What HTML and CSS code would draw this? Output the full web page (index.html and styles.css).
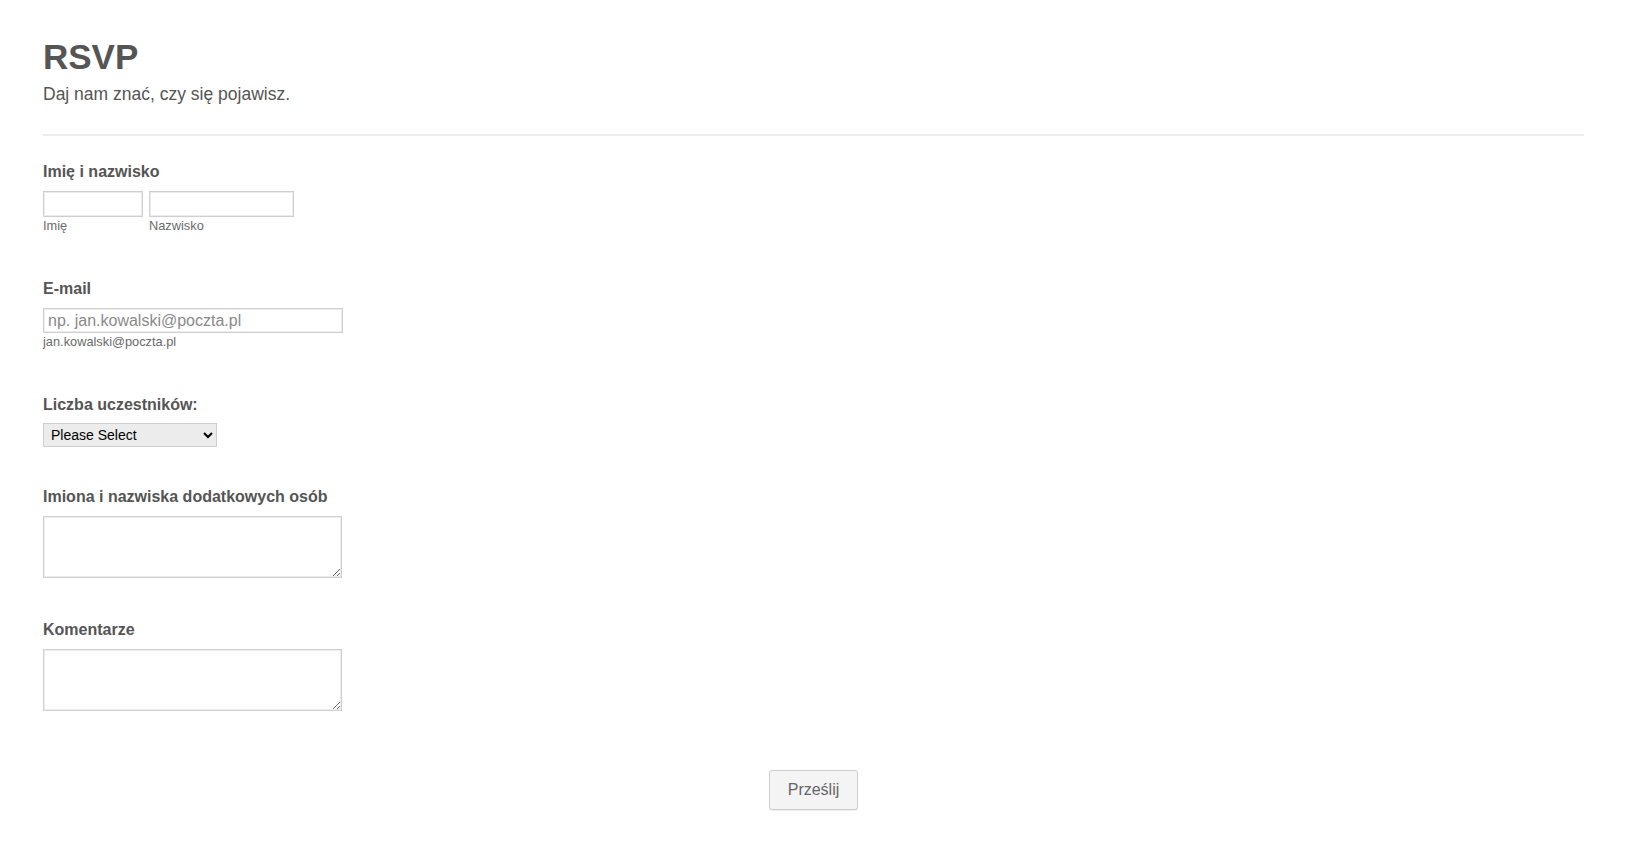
FILE: index.html
```html
<!DOCTYPE html>
<html>
<head>
    <meta charset="utf-8">
    <title>RSVP</title>
    <link rel="stylesheet" href="styles.css">
</head>
<body>
    <form class="form-all" id="rsvpForm">
        <!-- Header -->
        <div class="form-header">
            <h1 class="form-title">RSVP</h1>
            <div class="form-subtitle">Daj nam znać, czy się pojawisz.</div>
        </div>

        <ul class="form-section">
            <!-- Name -->
            <li class="form-line with-sublabel">
                <label class="form-label">Imię i nazwisko</label>
                <div class="name-row">
                    <span class="sub-field">
                        <input type="text" id="first_name" name="first_name" class="input-first">
                        <label for="first_name" class="form-sublabel">Imię</label>
                    </span>
                    <span class="sub-field">
                        <input type="text" id="last_name" name="last_name" class="input-last">
                        <label for="last_name" class="form-sublabel">Nazwisko</label>
                    </span>
                </div>
            </li>

            <!-- Email -->
            <li class="form-line with-sublabel">
                <label class="form-label" for="email">E-mail</label>
                <input type="email" id="email" name="email" class="input-email" placeholder="np. jan.kowalski@poczta.pl">
                <label for="email" class="form-sublabel">jan.kowalski@poczta.pl</label>
            </li>

            <!-- Guests -->
            <li class="form-line with-select">
                <label class="form-label" for="guests">Liczba uczestników:</label>
                <select id="guests" name="guests" class="input-select">
                    <option value="">Please Select</option>
                    <option value="1">1</option>
                    <option value="2">2</option>
                    <option value="3">3</option>
                    <option value="4">4</option>
                </select>
            </li>

            <!-- Extra guests -->
            <li class="form-line with-textarea">
                <label class="form-label" for="extra_names">Imiona i nazwiska dodatkowych osób</label>
                <textarea id="extra_names" name="extra_names" class="input-textarea"></textarea>
            </li>

            <!-- Comments -->
            <li class="form-line with-textarea">
                <label class="form-label" for="comments">Komentarze</label>
                <textarea id="comments" name="comments" class="input-textarea"></textarea>
            </li>
        </ul>

        <div class="form-buttons">
            <button type="submit" class="submit-button">Prześlij</button>
        </div>
    </form>
</body>
</html>
```

FILE: styles.css
```css
body {
    margin: 0;
    padding: 0;
    background-color: #fff;
    color: #555;
    font-family: "Liberation Sans", Arial, sans-serif;
}

.form-all {
    padding: 36px 44px 40px 43px;
}

/* Header */
.form-header {
    padding-bottom: 29px;
    border-bottom: 2px solid #ececec;
}

.form-title {
    margin: 0;
    font-size: 35px;
    line-height: 42px;
    font-weight: bold;
    color: #555;
}

.form-subtitle {
    margin-top: 5px;
    font-size: 17.5px;
    line-height: 22px;
    color: #555;
}

/* Fields */
.form-section {
    list-style: none;
    margin: 26px 0 0 0;
    padding: 0;
}

.form-line {
    margin-bottom: 38px;
}

.form-line.with-sublabel {
    margin-bottom: 46px;
}

.form-line.with-select {
    margin-bottom: 40px;
}

.form-line.with-select .form-label {
    margin-bottom: 8px;
}

.form-line.with-textarea {
    margin-bottom: 42px;
}

.form-label {
    display: block;
    font-size: 16px;
    line-height: 20px;
    font-weight: bold;
    color: #555;
    margin-bottom: 9px;
}

.form-sublabel {
    display: block;
    margin-top: 1px;
    font-size: 12.8px;
    line-height: 15px;
    color: #6a6a6a;
}

.name-row {
    display: flex;
    gap: 6px;
}

.sub-field {
    display: flex;
    flex-direction: column;
}

input[type="text"], input[type="email"] {
    box-sizing: border-box;
    display: block;
    height: 26px;
    margin: 0;
    padding: 0 4px;
    border: 1px solid #cfcfcf;
    box-shadow: inset 0 0 0 1px #ececec;
    background: #fff;
    font-family: "Liberation Sans", Arial, sans-serif;
    font-size: 16px;
    color: #555;
}

.input-first {
    width: 100px;
}

.input-last {
    width: 145px;
}

.input-email {
    width: 300px;
    height: 25px !important;
}

input::placeholder {
    color: #8a8a8a;
}

.input-select {
    display: block;
    box-sizing: border-box;
    width: 174px;
    height: 24px;
    margin: 0;
    padding: 0 3px;
    border: 1px solid #cfcfcf;
    background-color: #ececec;
    font-family: "Liberation Sans", Arial, sans-serif;
    font-size: 14px;
    color: #000;
}

.input-textarea {
    display: block;
    box-sizing: border-box;
    width: 299px;
    height: 62px;
    margin: 0;
    padding: 4px;
    border: 1px solid #cfcfcf;
    box-shadow: inset 0 0 0 1px #ececec;
    font-family: "Liberation Sans", Arial, sans-serif;
    font-size: 14px;
}

/* Submit */
.form-buttons {
    text-align: center;
    margin-top: 59px;
}

.submit-button {
    box-sizing: border-box;
    height: 40px;
    padding: 0 18px;
    border: 1px solid #cdcdcd;
    border-radius: 3px;
    background-color: #f4f4f4;
    box-shadow: 0 1px 1px rgba(0, 0, 0, 0.08);
    font-family: "Liberation Sans", Arial, sans-serif;
    font-size: 16px;
    color: #666;
    cursor: pointer;
}

.submit-button:hover {
    background-color: #eaeaea;
}
```
